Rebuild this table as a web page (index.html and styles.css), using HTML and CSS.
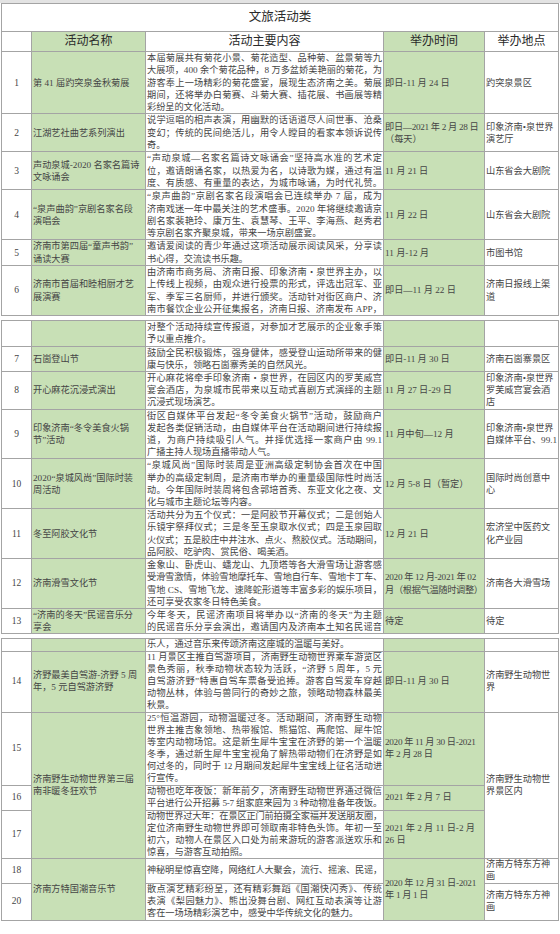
FILE: index.html
```html
<!DOCTYPE html>
<html lang="zh-CN">
<head>
<meta charset="utf-8">
<title>文旅活动类</title>
<link rel="stylesheet" href="styles.css">
</head>
<body>
<div class="page">
  <table class="sheet part-1">
    <colgroup><col class="c-num"><col class="c-name"><col class="c-text"><col class="c-time"><col class="c-place"></colgroup>
    <tr class="title"><td colspan="5">文旅活动类</td></tr>
    <tr class="head">
      <td></td><td class="g">活动名称</td><td>活动主要内容</td><td class="g">举办时间</td><td>举办地点</td>
    </tr>
    <tr>
      <td class="n">1</td><td class="g">第 41 届趵突泉金秋菊展</td>
      <td class="c"><div>本届菊展共有菊花小景、菊花造型、品种菊、盆景菊等九</div><div>大展项，400 余个菊花品种，8 万多盆娇美艳丽的菊花，为</div><div>游客奉上一场精彩的菊花盛宴，展现生态济南之美。菊展</div><div>期间，还将举办白菊赛、斗菊大赛、插花展、书画展等精</div><div>彩纷呈的文化活动。</div></td>
      <td class="g">即日-11 月 24 日</td><td>趵突泉景区</td>
    </tr>
    <tr>
      <td class="n">2</td><td class="g">江湖艺社曲艺系列演出</td>
      <td class="c"><div>说学逗唱的相声表演，用幽默的话语道尽人间世事、沧桑</div><div>变幻；传统的民间绝活儿，用令人瞠目的看家本领诉说传</div><div>奇。</div></td>
      <td class="g"><span class="tight">即日—2021 年 2 月 28 日</span><br>（每天）</td><td>印象济南•泉世界<br>演艺厅</td>
    </tr>
    <tr>
      <td class="n">3</td><td class="g">声动泉城-2020 名家名篇诗<br>文咏诵会</td>
      <td class="c"><div>“声动泉城—名家名篇诗文咏诵会”坚持高水准的艺术定</div><div>位，邀请朗诵名家，以热爱为名，以诗歌为媒，通过有温</div><div class="f">度、有质感、有重量的表达，为城市咏诵，为时代礼赞。</div></td>
      <td class="g">11 月 21 日</td><td>山东省会大剧院</td>
    </tr>
    <tr>
      <td class="n">4</td><td class="g">“泉声曲韵”京剧名家名段<br>演唱会</td>
      <td class="c"><div>“泉声曲韵”京剧名家名段演唱会已连续举办 7 届，成为</div><div>济南戏迷一年中最关注的艺术盛事。2020 年将继续邀请京</div><div>剧名家裴艳玲、康万生、袁慧琴、王平、李海燕、赵秀君</div><div>等京剧名家齐聚泉城，带来一场京剧盛宴。</div></td>
      <td class="g">11 月 22 日</td><td>山东省会大剧院</td>
    </tr>
    <tr>
      <td class="n">5</td><td class="g">济南市第四届“童声书韵”<br>诵读大赛</td>
      <td class="c"><div>邀请爱阅读的青少年通过这项活动展示阅读风采，分享读</div><div>书心得，交流读书乐趣。</div></td>
      <td class="g">11 月-12 月</td><td>市图书馆</td>
    </tr>
    <tr>
      <td class="n">6</td><td class="g">济南市首届和睦相厨才艺<br>展演赛</td>
      <td class="c"><div>由济南市商务局、济南日报、印象济南・泉世界主办，以</div><div>上传线上视频，由观众进行投票的形式，评选出冠军、亚</div><div>军、季军三名厨师，并进行颁奖。活动针对街区商户、济</div><div class="f">南市餐饮企业公开征集报名，济南日报、济南发布 APP，</div></td>
      <td class="g">即日—11 月 22 日</td><td>济南日报线上渠<br>道</td>
    </tr>
  </table>

  <table class="sheet part-2">
    <colgroup><col class="c-num"><col class="c-name"><col class="c-text"><col class="c-time"><col class="c-place"></colgroup>
    <tr>
      <td class="n"></td><td class="g"></td>
      <td class="c"><div>对整个活动持续宣传报道，对参加才艺展示的企业象手策</div><div>予以重点推介。</div></td>
      <td class="g"></td><td></td>
    </tr>
    <tr>
      <td class="n">7</td><td class="g">石崮登山节</td>
      <td class="c"><div>鼓励全民积极锻炼，强身健体，感受登山运动所带来的健</div><div>康与快乐，领略石崮寨秀美的自然风光。</div></td>
      <td class="g">即日-11 月 30 日</td><td>济南石崮寨景区</td>
    </tr>
    <tr>
      <td class="n">8</td><td class="g">开心麻花沉浸式演出</td>
      <td class="c"><div>开心麻花将牵手印象济南・泉世界，在园区内的罗芙威宫</div><div>宴会酒店，为泉城市民带来以互动式喜剧方式演绎的主题</div><div>沉浸式现场演艺。</div></td>
      <td class="g">11 月 27 日-29 日</td><td>印象济南•泉世界<br>罗芙威宫宴会酒<br>店</td>
    </tr>
    <tr>
      <td class="n">9</td><td class="g">印象济南“冬令美食火锅<br>节”活动</td>
      <td class="c"><div>街区自媒体平台发起“冬令美食火锅节”活动，鼓励商户</div><div>发起各类促销活动，由自媒体平台在活动期间进行持续报</div><div>道，为商户持续吸引人气。并择优选择一家商户由 99.1</div><div>广播主持人现场直播带动人气。</div></td>
      <td class="g">11 月中旬—12 月</td><td>印象济南•泉世界<br>自媒体平台、99.1</td>
    </tr>
    <tr>
      <td class="n">10</td><td class="g">2020“泉城风尚”国际时装<br>周活动</td>
      <td class="c"><div>“泉城风尚”国际时装周是亚洲高级定制协会首次在中国</div><div>举办的高级定制周，是济南市举办的重量级国际性时尚活</div><div>动。今年国际时装周将包含郭培首秀、东亚文化之夜、文</div><div>化与城市主题论坛等内容。</div></td>
      <td class="g">12 月 5-8 日（暂定）</td><td>国际时尚创意中<br>心</td>
    </tr>
    <tr>
      <td class="n">11</td><td class="g">冬至阿胶文化节</td>
      <td class="c"><div>活动共分为五个仪式：一是阿胶节开幕仪式；二是创始人</div><div>乐镜宇祭拜仪式；三是冬至玉泉取水仪式；四是玉泉园取</div><div class="t">火仪式；五是胶庄中井注水、点火、熬胶仪式。活动期间，</div><div>品阿胶、吃驴肉、赏民俗、喝美酒。</div></td>
      <td class="g">12 月 21 日</td><td>宏济堂中医药文<br>化产业园</td>
    </tr>
    <tr>
      <td class="n">12</td><td class="g">济南滑雪文化节</td>
      <td class="c"><div>金象山、卧虎山、蟠龙山、九顶塔等各大滑雪场让游客感</div><div class="t">受滑雪激情，体验雪地摩托车、雪地自行车、雪地卡丁车、</div><div>雪地 CS、雪地飞龙、速降蛇形道等丰富多彩的娱乐项目，</div><div>还可享受农家冬日特色美食。</div></td>
      <td class="g"><span class="tight">2020 年 12 月-2021 年 02<br>月（根据气温随时调整）</span></td><td>济南各大滑雪场</td>
    </tr>
    <tr>
      <td class="n">13</td><td class="g">“济南的冬天”民谣音乐分<br>享会</td>
      <td class="c"><div>今年冬天，民谣济南项目将举办以“济南的冬天”为主题</div><div class="f">的民谣音乐分享会演出，邀请国内及济南本土知名民谣音</div></td>
      <td class="g">待定</td><td>待定</td>
    </tr>
  </table>

  <table class="sheet part-3">
    <colgroup><col class="c-num"><col class="c-name"><col class="c-text"><col class="c-time"><col class="c-place"></colgroup>
    <tr>
      <td class="n"></td><td class="g"></td>
      <td class="c"><div>乐人，通过音乐来传颂济南这座城的温暖与美好。</div></td>
      <td class="g"></td><td></td>
    </tr>
    <tr>
      <td class="n">14</td><td class="g">济野最美自驾游-济野 5 周<br>年，5 元自驾游济野</td>
      <td class="c"><div>11 月景区主推自驾游项目，济南野生动物世界乘车游览区</div><div>景色秀丽，秋季动物状态较为活跃，“济野 5 周年，5 元</div><div>自驾游济野”特惠自驾车票备受追捧。游客自驾爱车穿越</div><div>动物丛林，体验与兽同行的奇妙之旅，领略动物森林最美</div><div>秋景。</div></td>
      <td class="g">即日-11 月 30 日</td><td>济南野生动物世<br>界</td>
    </tr>
    <tr>
      <td class="n">15</td><td class="g" rowspan="3">济南野生动物世界第三届<br>南非暖冬狂欢节</td>
      <td class="c"><div>25°恒温游园，动物温暖过冬。活动期间，济南野生动物</div><div>世界主推吉象领地、热带猴馆、熊猫馆、两爬馆、犀牛馆</div><div>等室内动物场馆。这是新生犀牛宝宝在济野的第一个温暖</div><div>冬季，通过新生犀牛宝宝视角了解热带动物们在济野是如</div><div class="t">何过冬的，同时于 12 月期间发起犀牛宝宝线上征名活动进</div><div>行宣传。</div></td>
      <td class="g"><span class="tight">2020 年 11 月 30 日-2021<br>年 2 月 28 日</span></td><td rowspan="3">济南野生动物世<br>界景区内</td>
    </tr>
    <tr>
      <td class="n">16</td>
      <td class="c"><div>动物也吃年夜饭：新年前夕，济南野生动物世界通过微信</div><div class="f t">平台进行公开招募 5-7 组家庭来园为 3 种动物准备年夜饭。</div></td>
      <td class="g">2021 年 2 月 7 日</td>
    </tr>
    <tr>
      <td class="n">17</td>
      <td class="c"><div class="t">动物世界过大年：在景区正门前拍摄全家福并发送朋友圈，</div><div>定位济南野生动物世界即可领取南非特色头饰。年初一至</div><div>初六，动物人在景区入口处为前来游玩的游客派送欢乐和</div><div>惊喜，与游客互动拍照。</div></td>
      <td class="g">2021 年 2 月 11 日-2 月<br>26 日</td>
    </tr>
    <tr>
      <td class="n">18</td><td class="g" rowspan="2">济南方特国潮音乐节</td>
      <td class="c"><div class="f t">神秘明星惊喜空降，网络红人大聚会，流行、摇滚、民谣，</div></td>
      <td class="g" rowspan="2"><span class="tight">2020 年 12 月 31 日-2021<br>年 1 月 1 日</span></td><td>济南方特东方神<br>画</td>
    </tr>
    <tr>
      <td class="n">20</td>
      <td class="c"><div>散点演艺精彩纷呈，还有精彩舞蹈《国潮快闪秀》、传统</div><div>表演《梨园魅力》、熊出没舞台剧、网红互动表演等让游</div><div>客在一场场精彩演艺中，感受中华传统文化的魅力。</div></td>
      <td>济南方特东方神<br>画</td>
    </tr>
  </table>
</div>
</body>
</html>
```

FILE: styles.css
```css
html, body {
  margin: 0;
  padding: 0;
  background: #ffffff;
  overflow: hidden;
}

.page {
  width: 560px;
  padding: 0 0 0 1px;
  border-top: 3px solid #e3e3e3;
  background: #ffffff;
}

.sheet {
  width: 557px;
  border-collapse: collapse;
  table-layout: fixed;
  font-family: "Liberation Serif", "Noto Sans CJK SC", serif;
  font-size: 9.2px;
  line-height: 12.3px;
  color: #454545;
}

.part-2 { line-height: 12.2px; }
.part-3 { line-height: 11.95px; }

.sheet + .sheet {
  margin-top: 4px;
}

.c-num { width: 30px; }
.c-name { width: 114px; }
.c-text { width: 238px; }
.c-time { width: 101px; }
.c-place { width: 74px; }

.sheet td {
  border: 1px solid #a4a4a4;
  padding: 0 1px;
  vertical-align: middle;
  white-space: nowrap;
  overflow: hidden;
  text-align: left;
}

.sheet td.g {
  background: #c8e0b6;
}

.sheet td.n {
  text-align: center;
  font-size: 9.5px;
}

.c div {
  text-align: justify;
  text-align-last: justify;
}

.c div:last-child {
  text-align-last: auto;
}

.c div.f {
  text-align-last: justify;
}

.c div.t,
.tight {
  letter-spacing: -0.3px;
}

.title td {
  height: 27px;
  font-size: 12.5px;
  color: #2a2a2a;
  text-align: center;
}

.head td {
  height: 19px;
  font-size: 12px;
  color: #2a2a2a;
  text-align: center;
}
```
